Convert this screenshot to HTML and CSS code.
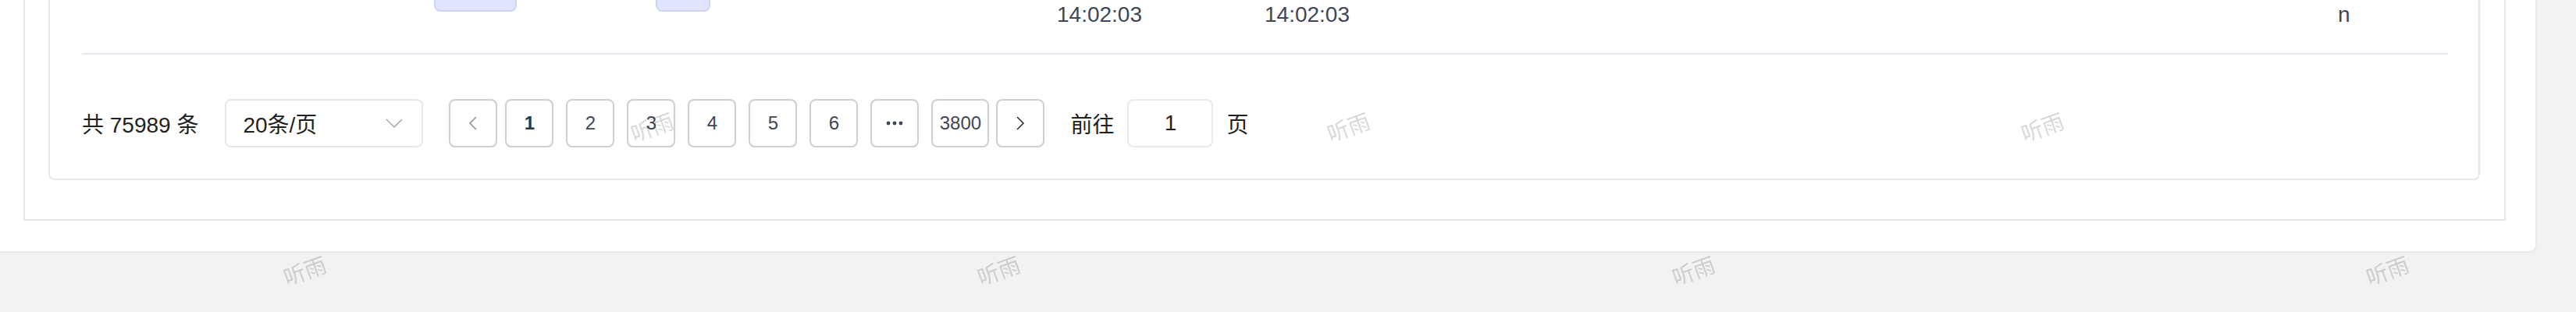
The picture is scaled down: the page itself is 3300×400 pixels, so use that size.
FILE: index.html
```html
<!DOCTYPE html>
<html lang="zh-CN">
<head>
<meta charset="utf-8">
<title>分页</title>
<link rel="stylesheet" href="styles.css">
</head>
<body>
<div class="page">
  <div class="panel">
    <div class="card">
      <div class="table-row">
        <div class="cell"></div>
        <div class="cell cell-tag"><span class="tag tag-wide"></span></div>
        <div class="cell cell-tag"><span class="tag tag-narrow"></span></div>
        <div class="cell cell-text">14:02:03</div>
        <div class="cell cell-text">14:02:03</div>
        <div class="cell cell-text">n</div>
      </div>
      <div class="pagination">
        <span class="total">共 75989 条</span>
        <div class="sizes">
          <span class="sizes-text">20条/页</span>
          <svg class="sizes-arrow" width="22" height="12" viewBox="0 0 22 12"><path d="M1 1 L11 11 L21 1" fill="none" stroke="#a8abb2" stroke-width="1.6"/></svg>
        </div>
        <button class="btn btn-prev" type="button">
          <svg width="12" height="20" viewBox="0 0 12 20"><path d="M10 2 L2 10 L10 18" fill="none" stroke="#8d9096" stroke-width="1.6"/></svg>
        </button>
        <ul class="pager">
          <li class="num active">1</li>
          <li class="num">2</li>
          <li class="num">3</li>
          <li class="num">4</li>
          <li class="num">5</li>
          <li class="num">6</li>
          <li class="num more"><svg width="22" height="6" viewBox="0 0 22 6"><circle cx="3" cy="3" r="2.4" fill="#3e4657"/><circle cx="11" cy="3" r="2.4" fill="#3e4657"/><circle cx="19" cy="3" r="2.4" fill="#3e4657"/></svg></li>
          <li class="num wide">3800</li>
        </ul>
        <button class="btn btn-next" type="button">
          <svg width="12" height="20" viewBox="0 0 12 20"><path d="M2 2 L10 10 L2 18" fill="none" stroke="#303133" stroke-width="1.6"/></svg>
        </button>
        <span class="jump-label">前往</span>
        <div class="jump-input">1</div>
        <span class="jump-label">页</span>
      </div>
    </div>
  </div>
</div>
<div class="watermarks">
  <span class="wm" style="left:390px;top:-22px">听雨</span>
  <span class="wm" style="left:1279px;top:-22px">听雨</span>
  <span class="wm" style="left:2169px;top:-22px">听雨</span>
  <span class="wm" style="left:3058px;top:-22px">听雨</span>
  <span class="wm" style="left:835px;top:162px">听雨</span>
  <span class="wm" style="left:1727px;top:162px">听雨</span>
  <span class="wm" style="left:2616px;top:162px">听雨</span>
  <span class="wm" style="left:390px;top:346px">听雨</span>
  <span class="wm" style="left:1279px;top:346px">听雨</span>
  <span class="wm" style="left:2169px;top:346px">听雨</span>
  <span class="wm" style="left:3058px;top:346px">听雨</span>
</div>
</body>
</html>
```
FILE: styles.css
```css
* { box-sizing: border-box; }
html, body {
  margin: 0;
  height: 400px;
  overflow: hidden;
}
body {
  position: relative;
  background: #f2f2f2;
  font-family: "Liberation Sans", "Noto Sans CJK SC", sans-serif;
  color: #262626;
}
.page {
  width: 3250px;
  background: #fff;
  border-right: 2px solid #e9e9e9;
  border-bottom: 2px solid #e9e9e9;
  border-bottom-right-radius: 10px;
  padding: 0 38px 39px 30px;
}
.panel {
  border: 2px solid #e6e6e6;
  border-top: none;
  padding: 0 31px 50px 30px;
}
.card {
  display: flex;
  flex-direction: column;
  border: 2px solid #e8e8e8;
  border-top: none;
  border-radius: 0 0 8px 8px;
  padding: 0 39px 40px 41px;
}
.table-row {
  margin-top: -20px;
  display: grid;
  grid-template-columns: 451px 284px 514px 266px 1375px 1fr;
  padding-bottom: 27px;
  border-bottom: 2px solid #e5e8f1;
  font-size: 28px;
  line-height: 44px;
  color: #3e4657;
}
.cell { min-height: 61px; }
.cell-text { padding-top: 17px; }
.cell-tag { display: flex; align-items: flex-start; padding-top: 1px; }
.tag {
  display: block;
  height: 34px;
  background: #e1e5fe;
  border: 2px solid #cdd3fa;
  border-radius: 8px;
}
.tag-wide { width: 106px; }
.tag-narrow { width: 70px; }

.pagination {
  margin-top: 57px;
  display: flex;
  align-items: center;
  height: 62px;
}
.total {
  flex: 0 0 147px;
  font-size: 28px;
  color: #222;
  margin-right: 34px;
  white-space: nowrap;
}
.sizes {
  flex: 0 0 254px;
  height: 62px;
  border: 2px solid #e4e7ed;
  border-radius: 8px;
  display: flex;
  align-items: center;
  justify-content: space-between;
  padding: 0 24px 0 21px;
  margin-right: 33px;
}
.sizes-text { font-size: 28px; color: #1f1f1f; }
.sizes-arrow { display: block; }
.btn {
  flex: 0 0 62px;
  height: 62px;
  border: 2px solid #cbcfd6;
  border-radius: 8px;
  background: #fff;
  padding: 0;
  display: flex;
  align-items: center;
  justify-content: center;
}
.btn svg { display: block; }
.btn-prev { margin-right: 10px; }
.btn-next { margin-left: 9px; margin-right: 33px; }
.pager {
  list-style: none;
  margin: 0;
  padding: 0;
  display: flex;
  gap: 16px;
}
.num {
  width: 62px;
  height: 62px;
  border: 2px solid #cbcfd6;
  border-radius: 8px;
  display: flex;
  align-items: center;
  justify-content: center;
  font-size: 24px;
  color: #3e4657;
}
.num.active { font-weight: bold; color: #2f3847; }
.num.wide { width: 74px; }
.num svg { display: block; }
.jump-label { font-size: 28px; color: #222; white-space: nowrap; }
.jump-input {
  flex: 0 0 110px;
  height: 62px;
  margin: 0 17px;
  border: 2px solid #e8eaee;
  border-radius: 8px;
  display: flex;
  align-items: center;
  justify-content: center;
  font-size: 28px;
  color: #1f1f1f;
}

.watermarks {
  position: absolute;
  left: 0;
  top: 0;
  width: 3300px;
  height: 400px;
  pointer-events: none;
  z-index: 10;
}
.wm {
  position: absolute;
  transform: translate(-50%, -50%) rotate(-20deg);
  font-family: "Noto Sans CJK SC", sans-serif;
  font-size: 28px;
  line-height: 1;
  color: rgba(0, 0, 0, 0.17);
  white-space: nowrap;
}
```
